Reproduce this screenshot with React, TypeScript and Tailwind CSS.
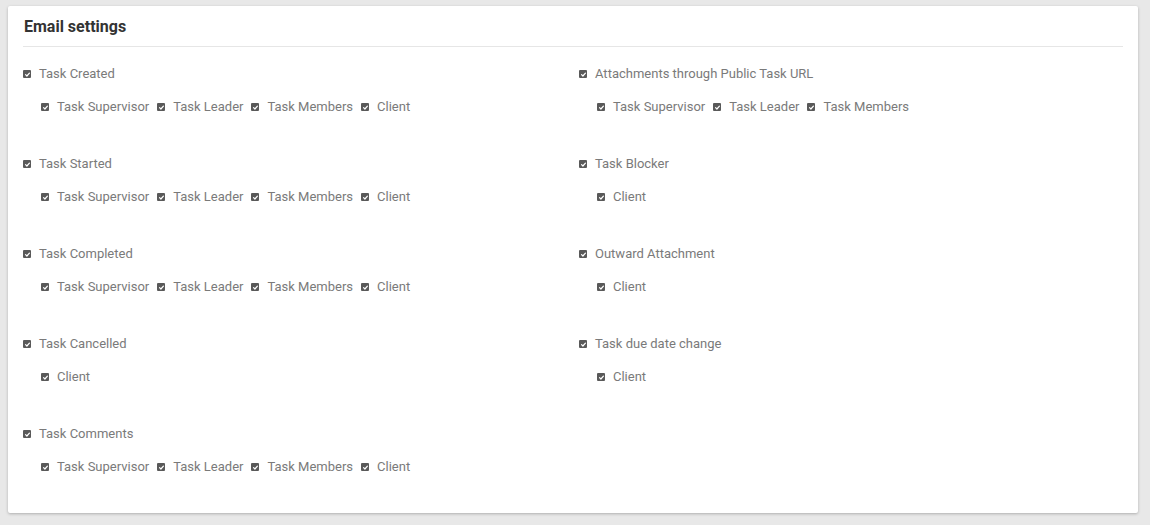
const Check = () => (
    <span className="inline-flex w-2 h-2 shrink-0 items-center justify-center rounded-[1px] bg-[#595959]">
        <svg className="w-[7px] h-[7px]" viewBox="0 0 8 8" fill="none" stroke="#fff" strokeWidth={1.4} strokeLinecap="round" strokeLinejoin="round">
            <path d="M1.8 4.2l1.5 1.5L6.2 2.4" />
        </svg>
    </span>
);

const ALL = ["Task Supervisor", "Task Leader", "Task Members", "Client"];

const left = [
    { title: "Task Created", items: ALL },
    { title: "Task Started", items: ALL },
    { title: "Task Completed", items: ALL },
    { title: "Task Cancelled", items: ["Client"] },
    { title: "Task Comments", items: ALL },
];

const right = [
    { title: "Attachments through Public Task URL", items: ["Task Supervisor", "Task Leader", "Task Members"] },
    { title: "Task Blocker", items: ["Client"] },
    { title: "Outward Attachment", items: ["Client"] },
    { title: "Task due date change", items: ["Client"] },
];

function Group({ title, items }: { title: string; items: string[] }) {
    return (
        <div className="h-[90px]">
            <div className="flex items-center gap-2 h-5">
                <Check />
                <span>{title}</span>
            </div>
            <div className="flex items-center h-5 mt-[13px] pl-[18px] gap-2">
                {items.map((it) => (
                    <div key={it} className="flex items-center gap-2">
                        <Check />
                        <span>{it}</span>
                    </div>
                ))}
            </div>
        </div>
    );
}

export default function App() {
    return (
        <div className="min-h-[525px] bg-[#e8e8e8] pt-[6px] pl-2 pr-3 pb-3" style={{ fontFamily: "Roboto, 'Noto Sans', sans-serif" }}>
            <div className="bg-white rounded-[2px] shadow-[0_1px_3px_rgba(0,0,0,0.25)] px-[15px] h-[507px]">
                <div className="pt-[10px] pb-2 border-b border-[#e6e6e6]">
                    <h1 className="text-[16px] leading-[22px] font-bold text-[#333] pl-[1px]">Email settings</h1>
                </div>
                <div className="grid grid-cols-[556px_1fr] pt-[17px] text-[13px] text-[#7a7a7a]">
                    <div>
                        {left.map((g) => (
                            <Group key={g.title} {...g} />
                        ))}
                    </div>
                    <div>
                        {right.map((g) => (
                            <Group key={g.title} {...g} />
                        ))}
                    </div>
                </div>
            </div>
        </div>
    );
}
